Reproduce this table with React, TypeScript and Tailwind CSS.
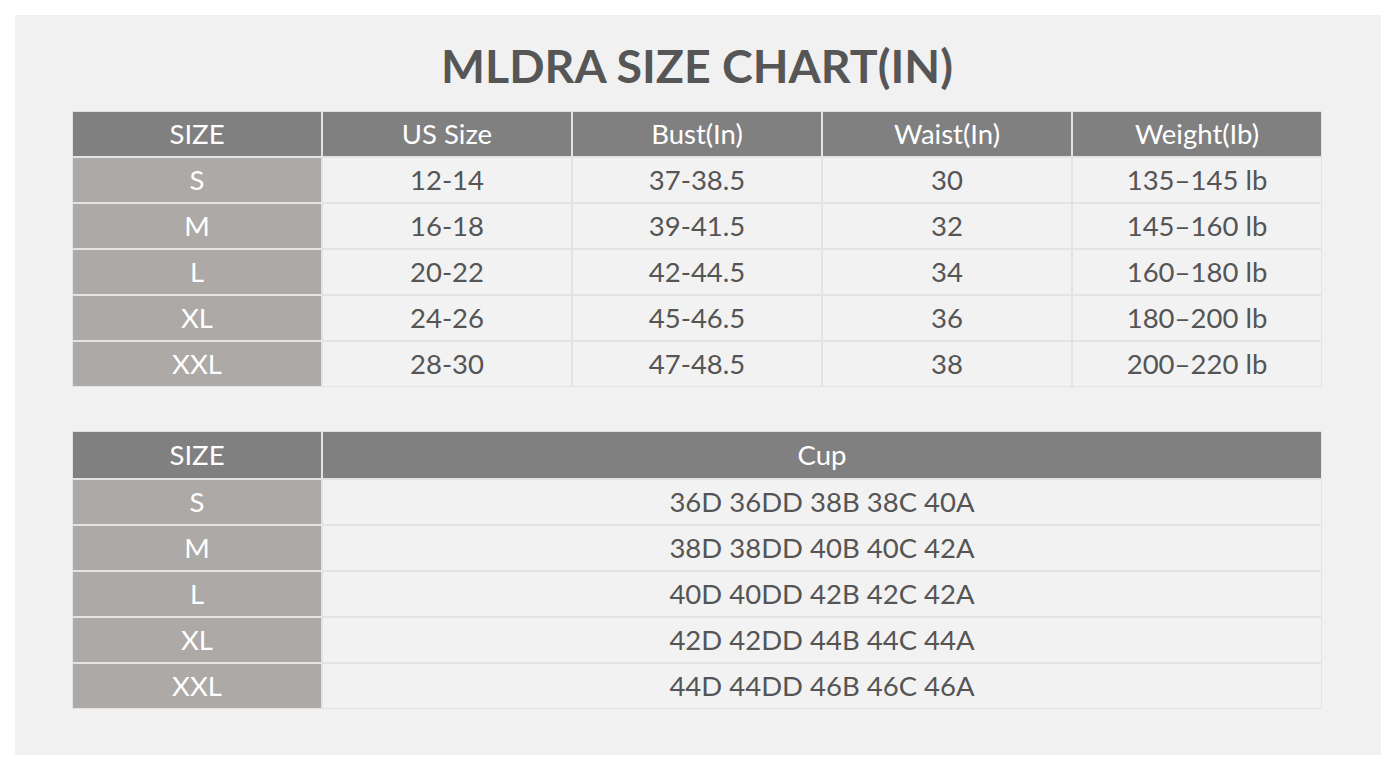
import React from 'react';

export default function App() {
  const rows = [
    { size: 'S', us: '12-14', bust: '37-38.5', waist: '30', weight: '135–145 lb' },
    { size: 'M', us: '16-18', bust: '39-41.5', waist: '32', weight: '145–160 lb' },
    { size: 'L', us: '20-22', bust: '42-44.5', waist: '34', weight: '160–180 lb' },
    { size: 'XL', us: '24-26', bust: '45-46.5', waist: '36', weight: '180–200 lb' },
    { size: 'XXL', us: '28-30', bust: '47-48.5', waist: '38', weight: '200–220 lb' },
  ];

  const cups = [
    { size: 'S', cup: '36D 36DD 38B 38C 40A' },
    { size: 'M', cup: '38D 38DD 40B 40C 42A' },
    { size: 'L', cup: '40D 40DD 42B 42C 42A' },
    { size: 'XL', cup: '42D 42DD 44B 44C 44A' },
    { size: 'XXL', cup: '44D 44DD 46B 46C 46A' },
  ];

  const headers = ['SIZE', 'US Size', 'Bust(In)', 'Waist(In)', 'Weight(Ib)'];

  const head = 'h-[44px] flex items-center justify-center bg-[#808080] text-white text-[27.5px]';
  const sizeCell = 'h-[44px] flex items-center justify-center bg-[#aca9a7] text-white text-[27.5px]';
  const cell = 'h-[44px] flex items-center justify-center bg-[#f2f2f2] text-[#555555] text-[27.5px]';

  return (
    <div className="w-[1396px] h-[770px] bg-white p-[15px]" style={{ fontFamily: 'Lato, "Open Sans", sans-serif' }}>
      <div className="w-[1366px] h-[740px] bg-[#f1f1f1] pl-[57px] pt-[13px]">
        {/* Title */}
        <h1 className="w-[1250px] h-[74px] mb-[9px] flex items-center justify-center text-[46.5px] font-bold text-[#565656] leading-none">
          MLDRA SIZE CHART(IN)
        </h1>

        {/* Size table */}
        <div className="w-[1250px] grid grid-cols-5 gap-[2px] bg-[#e3e3e3] border border-[#e3e3e3]">
          {headers.map((h) => (
            <div key={h} className={head}>
              {h}
            </div>
          ))}
          {rows.map((r) => (
            <React.Fragment key={r.size}>
              <div className={sizeCell}>{r.size}</div>
              <div className={cell}>{r.us}</div>
              <div className={cell}>{r.bust}</div>
              <div className={cell}>{r.waist}</div>
              <div className={cell}>{r.weight}</div>
            </React.Fragment>
          ))}
        </div>

        {/* Cup table */}
        <div className="mt-[44px] w-[1250px] grid grid-cols-[248px_1fr] gap-[2px] bg-[#e3e3e3] border border-[#e3e3e3]">
          <div className={`${head} h-[46px]`}>SIZE</div>
          <div className={`${head} h-[46px]`}>Cup</div>
          {cups.map((c) => (
            <React.Fragment key={c.size}>
              <div className={sizeCell}>{c.size}</div>
              <div className={cell}>{c.cup}</div>
            </React.Fragment>
          ))}
        </div>
      </div>
    </div>
  );
}
